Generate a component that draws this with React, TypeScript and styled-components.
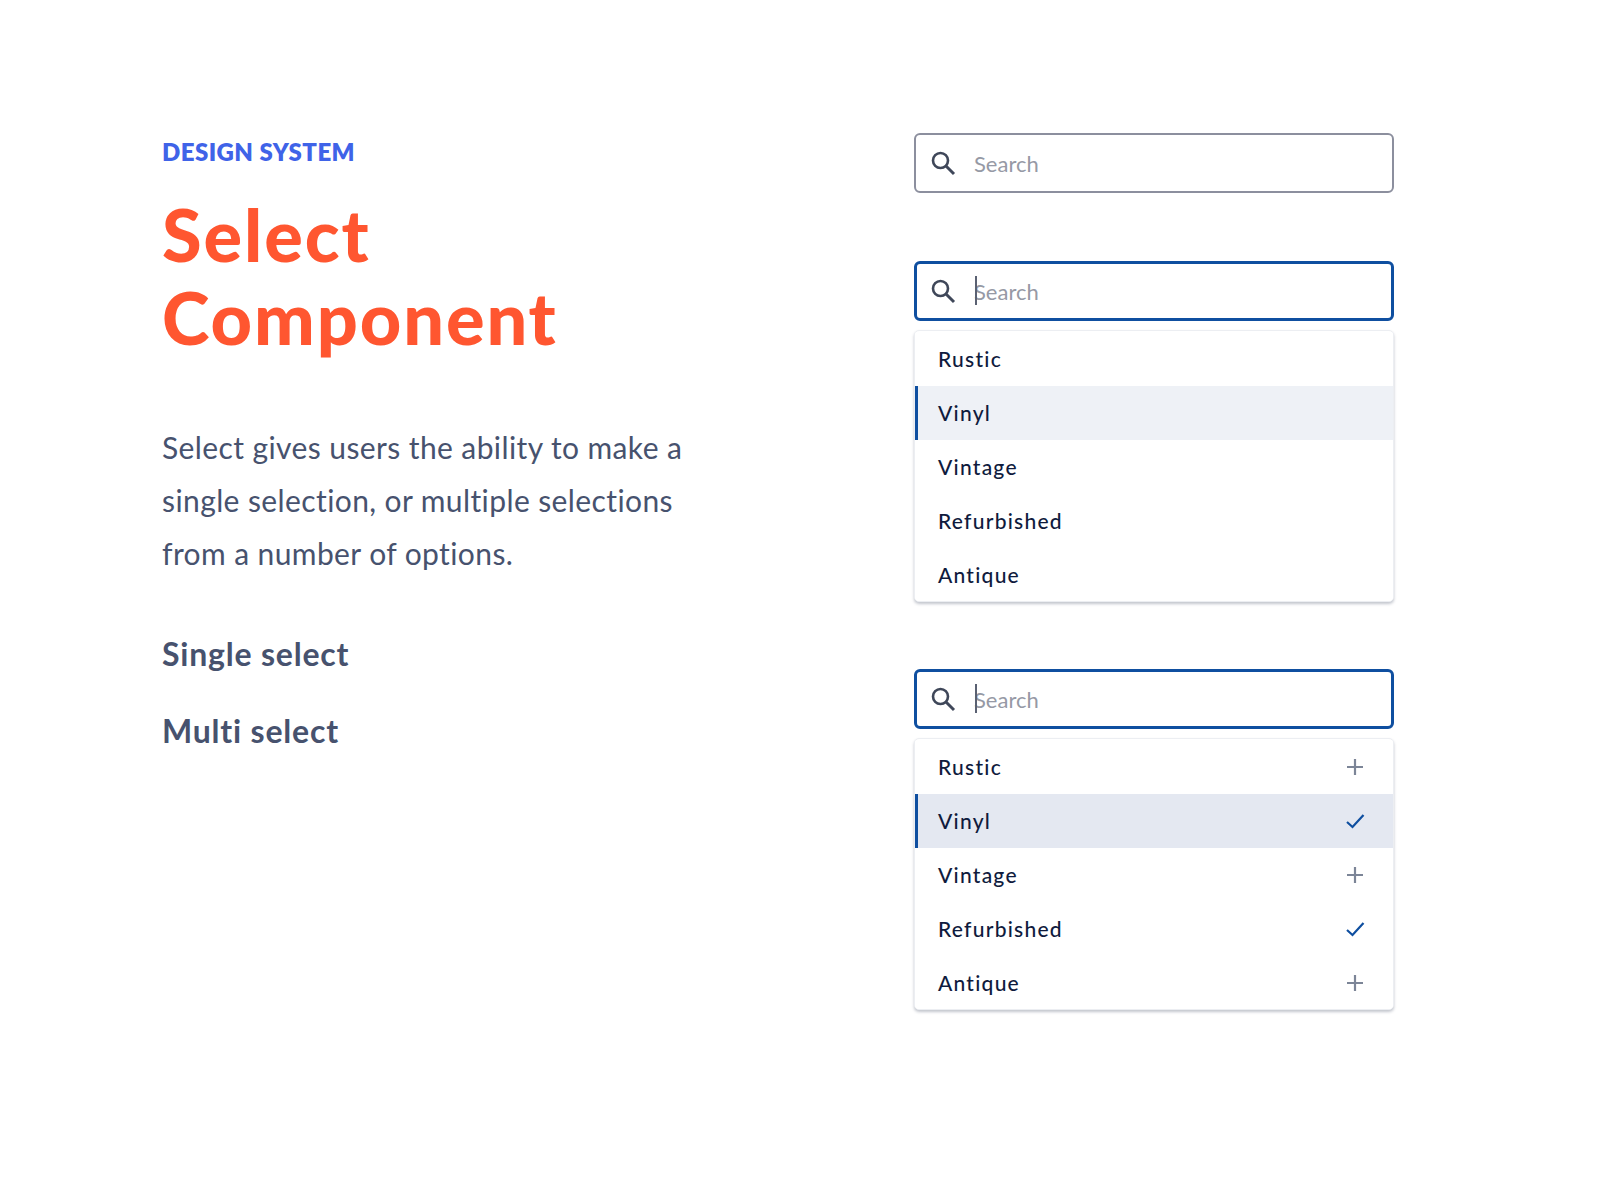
import React from 'react';
import styled, { createGlobalStyle } from 'styled-components';

const GlobalStyle = createGlobalStyle`
  body {
    margin: 0;
    background: #ffffff;
    font-family: 'Lato', 'Liberation Sans', sans-serif;
    font-variant-ligatures: none;
  }
`;

const Page = styled.div`
  width: 1600px;
  height: 1200px;
  box-sizing: border-box;
  padding: 133px 206px 0 162px;
  display: flex;
  justify-content: space-between;
`;

const Intro = styled.section`
  width: 560px;
`;

const Eyebrow = styled.div`
  font-size: 24px;
  line-height: 30px;
  font-weight: 800;
  letter-spacing: 0.45px;
  color: #3f63e8;
  margin-top: 4px;
`;

const Title = styled.h1`
  margin: 26px 0 0;
  font-size: 72px;
  line-height: 83px;
  font-weight: 900;
  letter-spacing: 1.9px;
  color: #ff5630;
`;

const Description = styled.p`
  margin: 62px 0 0;
  font-size: 30px;
  line-height: 53px;
  letter-spacing: 0.4px;
  color: #47526e;
`;

const SectionLabel = styled.h2`
  margin: 0;
  font-size: 32px;
  line-height: 40px;
  font-weight: 700;
  letter-spacing: 0.8px;
  color: #47526e;
`;

const LabelList = styled.div`
  margin-top: 54px;
  display: flex;
  flex-direction: column;
  gap: 37px;
`;

const Controls = styled.section`
  width: 480px;
  display: flex;
  flex-direction: column;
  gap: 67px;
`;

const SelectGroup = styled.div`
  display: flex;
  flex-direction: column;
  gap: 9px;
`;

const IdleField = styled.div`
  margin-bottom: 1px;
`;

const SearchBox = styled.div<{ $focused?: boolean }>`
  height: 60px;
  box-sizing: border-box;
  display: flex;
  align-items: center;
  gap: 17px;
  padding-left: ${({ $focused }) => ($focused ? '12px' : '13px')};
  border: ${({ $focused }) => ($focused ? '3px solid #0f4fa0' : '2px solid #8c8f9e')};
  border-radius: 6px;
  background: #fff;
`;

const SearchIcon = styled.svg`
  width: 28px;
  height: 28px;
  flex: none;
  color: #3f4759;
`;

const Placeholder = styled.span`
  position: relative;
  font-size: 22px;
  color: #9699a5;
`;

const Caret = styled.span`
  position: absolute;
  left: 1px;
  top: -2px;
  width: 1.5px;
  height: 29px;
  background: #5a6172;
`;

const Menu = styled.div`
  box-sizing: border-box;
  padding-top: 1px;
  border: 1px solid #eceef2;
  border-radius: 5px;
  background: #fff;
  box-shadow: 0 2px 3px rgba(40, 50, 80, 0.28);
  overflow: hidden;
`;

const Row = styled.div<{ $active?: 'soft' | 'strong' }>`
  height: 54px;
  box-sizing: border-box;
  display: flex;
  align-items: center;
  justify-content: space-between;
  padding: 0 26px 2px ${({ $active }) => ($active ? '20px' : '23px')};
  font-size: 21px;
  font-weight: 500;
  letter-spacing: 1.25px;
  color: #0f1b3d;
  background: ${({ $active }) =>
    $active === 'strong' ? '#e4e8f1' : $active === 'soft' ? '#eef1f6' : '#fff'};
  border-left: ${({ $active }) => ($active ? '3px solid #0f4fa0' : 'none')};

  &:last-child {
    height: 53px;
    padding-bottom: 1px;
  }
`;

const RowIcon = styled.svg`
  width: 24px;
  height: 24px;
  flex: none;
  margin-top: 2px;
`;

const Search = ({ focused }: { focused?: boolean }) => (
  <SearchBox $focused={focused}>
    <SearchIcon viewBox="0 0 28 28" fill="none" stroke="currentColor">
      <circle cx="11.5" cy="11.5" r="7.5" strokeWidth="2.6" />
      <path d="M17 17l8 8" strokeWidth="3" />
    </SearchIcon>
    <Placeholder>
      {focused && <Caret />}
      Search
    </Placeholder>
  </SearchBox>
);

const PlusIcon = () => (
  <RowIcon viewBox="0 0 24 24" fill="none" stroke="#7c8597" strokeWidth="2.2">
    <path d="M12 4v16M4 12h16" />
  </RowIcon>
);

const CheckIcon = () => (
  <RowIcon viewBox="0 0 24 24" fill="none" stroke="#0f4fa0" strokeWidth="2.2">
    <path d="M4 13l5.500 5L20.500 6" />
  </RowIcon>
);

const options = ['Rustic', 'Vinyl', 'Vintage', 'Refurbished', 'Antique'];

const App: React.FC = () => (
  <>
    <GlobalStyle />
    <Page>
      <Intro>
        <Eyebrow>DESIGN SYSTEM</Eyebrow>
        <Title>
          Select
          <br />
          Component
        </Title>
        <Description>
          Select gives users the ability to make a
          <br />
          single selection, or multiple selections
          <br />
          from a number of options.
        </Description>
        <LabelList>
          <SectionLabel>Single select</SectionLabel>
          <SectionLabel>Multi select</SectionLabel>
        </LabelList>
      </Intro>
      <Controls>
        <IdleField>
          <Search />
        </IdleField>
        <SelectGroup>
          <Search focused />
          <Menu>
            {options.map((o) => (
              <Row key={o} $active={o === 'Vinyl' ? 'soft' : undefined}>
                {o}
              </Row>
            ))}
          </Menu>
        </SelectGroup>
        <SelectGroup>
          <Search focused />
          <Menu>
            {options.map((o) => (
              <Row key={o} $active={o === 'Vinyl' ? 'strong' : undefined}>
                {o}
                {o === 'Vinyl' || o === 'Refurbished' ? <CheckIcon /> : <PlusIcon />}
              </Row>
            ))}
          </Menu>
        </SelectGroup>
      </Controls>
    </Page>
  </>
);

export default App;
